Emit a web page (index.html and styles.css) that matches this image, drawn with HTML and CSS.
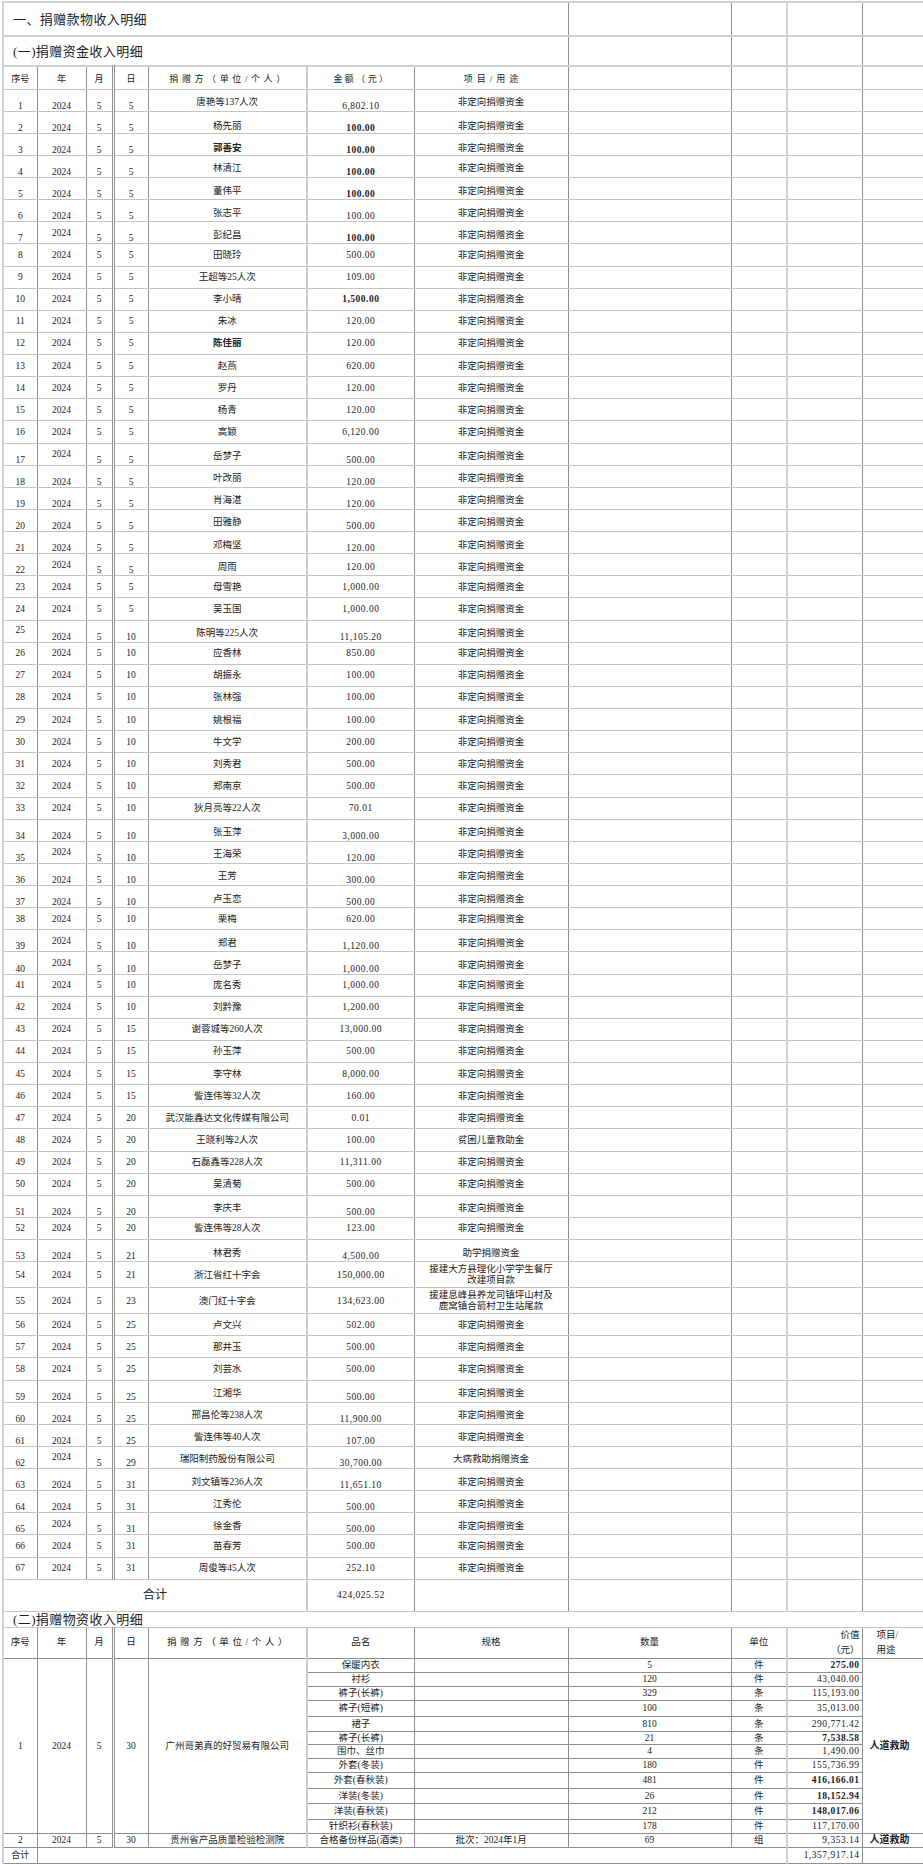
FILE: index.html
```html
<!DOCTYPE html>
<html lang="zh-CN">
<head>
<meta charset="utf-8">
<title>捐赠款物收入明细</title>
<link rel="stylesheet" href="styles.css">
</head>
<body>
<table class="sheet">
<colgroup>
<col class="c1"><col class="c2"><col class="c3"><col class="c4"><col class="c5"><col class="c6"><col class="c7"><col class="c8"><col class="c9"><col class="c10"><col class="c11">
</colgroup>
<tbody class="top">
<tr class="t1"><td colspan="7" class="tt">一、捐赠款物收入明细</td><td></td><td></td><td></td><td></td></tr>
<tr class="t2"><td colspan="7" class="tt">(一)捐赠资金收入明细</td><td></td><td></td><td></td><td></td></tr>
<tr class="hd"><td>序号</td><td>年</td><td>月</td><td>日</td><td class="sp1">捐赠方（单位/个人）</td><td class="sp2">金额（元）</td><td class="sp3">项目/用途</td><td></td><td></td><td></td><td></td></tr>
</tbody>
<tbody class="s1">
<tr class="o"><td>1</td><td>2024</td><td>5</td><td>5</td><td>唐艳等137人次</td><td>6,802.10</td><td>非定向捐赠资金</td><td></td><td></td><td></td><td></td></tr>
<tr class="b"><td>2</td><td>2024</td><td>5</td><td>5</td><td>杨先丽</td><td class="bd">100.00</td><td>非定向捐赠资金</td><td></td><td></td><td></td><td></td></tr>
<tr class="b"><td>3</td><td>2024</td><td>5</td><td>5</td><td class="bd">郭善安</td><td class="bd">100.00</td><td>非定向捐赠资金</td><td></td><td></td><td></td><td></td></tr>
<tr class="o"><td>4</td><td>2024</td><td>5</td><td>5</td><td>林清江</td><td class="bd">100.00</td><td>非定向捐赠资金</td><td></td><td></td><td></td><td></td></tr>
<tr class="o"><td>5</td><td>2024</td><td>5</td><td>5</td><td>董伟平</td><td class="bd">100.00</td><td>非定向捐赠资金</td><td></td><td></td><td></td><td></td></tr>
<tr class="o"><td>6</td><td>2024</td><td>5</td><td>5</td><td>张志平</td><td>100.00</td><td>非定向捐赠资金</td><td></td><td></td><td></td><td></td></tr>
<tr class="o yt"><td>7</td><td>2024</td><td>5</td><td>5</td><td>彭纪昌</td><td class="bd">100.00</td><td>非定向捐赠资金</td><td></td><td></td><td></td><td></td></tr>
<tr><td>8</td><td>2024</td><td>5</td><td>5</td><td>田晓玲</td><td>500.00</td><td>非定向捐赠资金</td><td></td><td></td><td></td><td></td></tr>
<tr><td>9</td><td>2024</td><td>5</td><td>5</td><td>王超等25人次</td><td>109.00</td><td>非定向捐赠资金</td><td></td><td></td><td></td><td></td></tr>
<tr><td>10</td><td>2024</td><td>5</td><td>5</td><td>李小晴</td><td class="bd">1,500.00</td><td>非定向捐赠资金</td><td></td><td></td><td></td><td></td></tr>
<tr><td>11</td><td>2024</td><td>5</td><td>5</td><td>朱冰</td><td>120.00</td><td>非定向捐赠资金</td><td></td><td></td><td></td><td></td></tr>
<tr><td>12</td><td>2024</td><td>5</td><td>5</td><td class="bd">陈佳丽</td><td>120.00</td><td>非定向捐赠资金</td><td></td><td></td><td></td><td></td></tr>
<tr><td>13</td><td>2024</td><td>5</td><td>5</td><td>赵燕</td><td>620.00</td><td>非定向捐赠资金</td><td></td><td></td><td></td><td></td></tr>
<tr><td>14</td><td>2024</td><td>5</td><td>5</td><td>罗丹</td><td>120.00</td><td>非定向捐赠资金</td><td></td><td></td><td></td><td></td></tr>
<tr><td>15</td><td>2024</td><td>5</td><td>5</td><td>杨青</td><td>120.00</td><td>非定向捐赠资金</td><td></td><td></td><td></td><td></td></tr>
<tr><td>16</td><td>2024</td><td>5</td><td>5</td><td>高颖</td><td>6,120.00</td><td>非定向捐赠资金</td><td></td><td></td><td></td><td></td></tr>
<tr class="o yt"><td>17</td><td>2024</td><td>5</td><td>5</td><td>岳梦子</td><td>500.00</td><td>非定向捐赠资金</td><td></td><td></td><td></td><td></td></tr>
<tr class="o"><td>18</td><td>2024</td><td>5</td><td>5</td><td>叶改丽</td><td>120.00</td><td>非定向捐赠资金</td><td></td><td></td><td></td><td></td></tr>
<tr class="o"><td>19</td><td>2024</td><td>5</td><td>5</td><td>肖海湛</td><td>120.00</td><td>非定向捐赠资金</td><td></td><td></td><td></td><td></td></tr>
<tr class="o"><td>20</td><td>2024</td><td>5</td><td>5</td><td>田雅静</td><td>500.00</td><td>非定向捐赠资金</td><td></td><td></td><td></td><td></td></tr>
<tr class="o"><td>21</td><td>2024</td><td>5</td><td>5</td><td>邓梅坚</td><td>120.00</td><td>非定向捐赠资金</td><td></td><td></td><td></td><td></td></tr>
<tr class="o yt at"><td>22</td><td>2024</td><td>5</td><td>5</td><td>周雨</td><td>120.00</td><td>非定向捐赠资金</td><td></td><td></td><td></td><td></td></tr>
<tr><td>23</td><td>2024</td><td>5</td><td>5</td><td>母雪艳</td><td>1,000.00</td><td>非定向捐赠资金</td><td></td><td></td><td></td><td></td></tr>
<tr><td>24</td><td>2024</td><td>5</td><td>5</td><td>吴玉国</td><td>1,000.00</td><td>非定向捐赠资金</td><td></td><td></td><td></td><td></td></tr>
<tr class="o st"><td>25</td><td>2024</td><td>5</td><td>10</td><td>陈明等225人次</td><td>11,105.20</td><td>非定向捐赠资金</td><td></td><td></td><td></td><td></td></tr>
<tr><td>26</td><td>2024</td><td>5</td><td>10</td><td>应香林</td><td>850.00</td><td>非定向捐赠资金</td><td></td><td></td><td></td><td></td></tr>
<tr><td>27</td><td>2024</td><td>5</td><td>10</td><td>胡振永</td><td>100.00</td><td>非定向捐赠资金</td><td></td><td></td><td></td><td></td></tr>
<tr><td>28</td><td>2024</td><td>5</td><td>10</td><td>张林强</td><td>100.00</td><td>非定向捐赠资金</td><td></td><td></td><td></td><td></td></tr>
<tr><td>29</td><td>2024</td><td>5</td><td>10</td><td>姚根福</td><td>100.00</td><td>非定向捐赠资金</td><td></td><td></td><td></td><td></td></tr>
<tr><td>30</td><td>2024</td><td>5</td><td>10</td><td>牛文学</td><td>200.00</td><td>非定向捐赠资金</td><td></td><td></td><td></td><td></td></tr>
<tr><td>31</td><td>2024</td><td>5</td><td>10</td><td>刘秀君</td><td>500.00</td><td>非定向捐赠资金</td><td></td><td></td><td></td><td></td></tr>
<tr><td>32</td><td>2024</td><td>5</td><td>10</td><td>郑南京</td><td>500.00</td><td>非定向捐赠资金</td><td></td><td></td><td></td><td></td></tr>
<tr><td>33</td><td>2024</td><td>5</td><td>10</td><td>狄月亮等22人次</td><td>70.01</td><td>非定向捐赠资金</td><td></td><td></td><td></td><td></td></tr>
<tr class="o"><td>34</td><td>2024</td><td>5</td><td>10</td><td>张玉萍</td><td>3,000.00</td><td>非定向捐赠资金</td><td></td><td></td><td></td><td></td></tr>
<tr class="o yt"><td>35</td><td>2024</td><td>5</td><td>10</td><td>王海荣</td><td>120.00</td><td>非定向捐赠资金</td><td></td><td></td><td></td><td></td></tr>
<tr class="o"><td>36</td><td>2024</td><td>5</td><td>10</td><td>王芳</td><td>300.00</td><td>非定向捐赠资金</td><td></td><td></td><td></td><td></td></tr>
<tr class="o"><td>37</td><td>2024</td><td>5</td><td>10</td><td>卢玉恋</td><td>500.00</td><td>非定向捐赠资金</td><td></td><td></td><td></td><td></td></tr>
<tr><td>38</td><td>2024</td><td>5</td><td>10</td><td>栗梅</td><td>620.00</td><td>非定向捐赠资金</td><td></td><td></td><td></td><td></td></tr>
<tr class="o yt"><td>39</td><td>2024</td><td>5</td><td>10</td><td>郑君</td><td>1,120.00</td><td>非定向捐赠资金</td><td></td><td></td><td></td><td></td></tr>
<tr class="o yt"><td>40</td><td>2024</td><td>5</td><td>10</td><td>岳梦子</td><td>1,000.00</td><td>非定向捐赠资金</td><td></td><td></td><td></td><td></td></tr>
<tr><td>41</td><td>2024</td><td>5</td><td>10</td><td>庞名秀</td><td>1,000.00</td><td>非定向捐赠资金</td><td></td><td></td><td></td><td></td></tr>
<tr><td>42</td><td>2024</td><td>5</td><td>10</td><td>刘黔豫</td><td>1,200.00</td><td>非定向捐赠资金</td><td></td><td></td><td></td><td></td></tr>
<tr><td>43</td><td>2024</td><td>5</td><td>15</td><td>谢蓉城等260人次</td><td>13,000.00</td><td>非定向捐赠资金</td><td></td><td></td><td></td><td></td></tr>
<tr><td>44</td><td>2024</td><td>5</td><td>15</td><td>孙玉萍</td><td>500.00</td><td>非定向捐赠资金</td><td></td><td></td><td></td><td></td></tr>
<tr><td>45</td><td>2024</td><td>5</td><td>15</td><td>李守林</td><td>8,000.00</td><td>非定向捐赠资金</td><td></td><td></td><td></td><td></td></tr>
<tr><td>46</td><td>2024</td><td>5</td><td>15</td><td>訾连伟等32人次</td><td>160.00</td><td>非定向捐赠资金</td><td></td><td></td><td></td><td></td></tr>
<tr><td>47</td><td>2024</td><td>5</td><td>20</td><td>武汉能鑫达文化传媒有限公司</td><td>0.01</td><td>非定向捐赠资金</td><td></td><td></td><td></td><td></td></tr>
<tr><td>48</td><td>2024</td><td>5</td><td>20</td><td>王晓利等2人次</td><td>100.00</td><td>贫困儿童救助金</td><td></td><td></td><td></td><td></td></tr>
<tr><td>49</td><td>2024</td><td>5</td><td>20</td><td>石磊鑫等228人次</td><td>11,311.00</td><td>非定向捐赠资金</td><td></td><td></td><td></td><td></td></tr>
<tr><td>50</td><td>2024</td><td>5</td><td>20</td><td>吴清菊</td><td>500.00</td><td>非定向捐赠资金</td><td></td><td></td><td></td><td></td></tr>
<tr class="o"><td>51</td><td>2024</td><td>5</td><td>20</td><td>李庆丰</td><td>500.00</td><td>非定向捐赠资金</td><td></td><td></td><td></td><td></td></tr>
<tr><td>52</td><td>2024</td><td>5</td><td>20</td><td>訾连伟等28人次</td><td>123.00</td><td>非定向捐赠资金</td><td></td><td></td><td></td><td></td></tr>
<tr class="o"><td>53</td><td>2024</td><td>5</td><td>21</td><td>林君秀</td><td>4,500.00</td><td>助学捐赠资金</td><td></td><td></td><td></td><td></td></tr>
<tr class="tall"><td>54</td><td>2024</td><td>5</td><td>21</td><td>浙江省红十字会</td><td>150,000.00</td><td class="two">援建大方县理化小学学生餐厅<br>改建项目款</td><td></td><td></td><td></td><td></td></tr>
<tr class="tall"><td>55</td><td>2024</td><td>5</td><td>23</td><td>澳门红十字会</td><td>134,623.00</td><td class="two">援建息峰县养龙司镇坪山村及<br>鹿窝镇合箭村卫生站尾款</td><td></td><td></td><td></td><td></td></tr>
<tr><td>56</td><td>2024</td><td>5</td><td>25</td><td>卢文兴</td><td>502.00</td><td>非定向捐赠资金</td><td></td><td></td><td></td><td></td></tr>
<tr><td>57</td><td>2024</td><td>5</td><td>25</td><td>那井玉</td><td>500.00</td><td>非定向捐赠资金</td><td></td><td></td><td></td><td></td></tr>
<tr><td>58</td><td>2024</td><td>5</td><td>25</td><td>刘芸水</td><td>500.00</td><td>非定向捐赠资金</td><td></td><td></td><td></td><td></td></tr>
<tr class="o"><td>59</td><td>2024</td><td>5</td><td>25</td><td>江湘华</td><td>500.00</td><td>非定向捐赠资金</td><td></td><td></td><td></td><td></td></tr>
<tr class="o"><td>60</td><td>2024</td><td>5</td><td>25</td><td>邢昌伦等238人次</td><td>11,900.00</td><td>非定向捐赠资金</td><td></td><td></td><td></td><td></td></tr>
<tr class="o"><td>61</td><td>2024</td><td>5</td><td>25</td><td>訾连伟等40人次</td><td>107.00</td><td>非定向捐赠资金</td><td></td><td></td><td></td><td></td></tr>
<tr class="o yt"><td>62</td><td>2024</td><td>5</td><td>29</td><td>瑞阳制药股份有限公司</td><td>30,700.00</td><td>大病救助捐赠资金</td><td></td><td></td><td></td><td></td></tr>
<tr class="o"><td>63</td><td>2024</td><td>5</td><td>31</td><td>刘文镇等236人次</td><td>11,651.10</td><td>非定向捐赠资金</td><td></td><td></td><td></td><td></td></tr>
<tr class="o"><td>64</td><td>2024</td><td>5</td><td>31</td><td>江秀伦</td><td>500.00</td><td>非定向捐赠资金</td><td></td><td></td><td></td><td></td></tr>
<tr class="o yt"><td>65</td><td>2024</td><td>5</td><td>31</td><td>徐金香</td><td>500.00</td><td>非定向捐赠资金</td><td></td><td></td><td></td><td></td></tr>
<tr><td>66</td><td>2024</td><td>5</td><td>31</td><td>苗春芳</td><td>500.00</td><td>非定向捐赠资金</td><td></td><td></td><td></td><td></td></tr>
<tr><td>67</td><td>2024</td><td>5</td><td>31</td><td>周俊等45人次</td><td>252.10</td><td>非定向捐赠资金</td><td></td><td></td><td></td><td></td></tr>
</tbody>
<tbody class="mid">
<tr class="sum1"><td colspan="5" class="big">合计</td><td class="num">424,025.52</td><td></td><td></td><td></td><td></td><td></td></tr>
<tr class="t3"><td colspan="11" class="tt">(二)捐赠物资收入明细</td></tr>
</tbody>
<tbody class="s2">
<tr class="h2"><td>序号</td><td>年</td><td>月</td><td>日</td><td class="sp1">捐赠方（单位/个人）</td><td>品名</td><td>规格</td><td>数量</td><td>单位</td><td class="val">价值<br>（元）</td><td class="use">项目/<br>用途</td></tr>
<tr class="h14"><td rowspan="12">1</td><td rowspan="12">2024</td><td rowspan="12">5</td><td rowspan="12">30</td><td rowspan="12">广州哥弟真的好贸易有限公司</td><td>保暖内衣</td><td></td><td>5</td><td>件</td><td class="r bd">275.00</td><td rowspan="12" class="aid bd">人道救助</td></tr>
<tr class="h14"><td>衬衫</td><td></td><td>120</td><td>件</td><td class="r">43,040.00</td></tr>
<tr class="h14"><td>裤子(长裤)</td><td></td><td>329</td><td>条</td><td class="r">115,193.00</td></tr>
<tr class="h16"><td>裤子(短裤)</td><td></td><td>100</td><td>条</td><td class="r">35,013.00</td></tr>
<tr class="h15"><td>裙子</td><td></td><td>810</td><td>条</td><td class="r">290,771.42</td></tr>
<tr class="h13"><td>裤子(长裤)</td><td></td><td>21</td><td>条</td><td class="r bd">7,538.58</td></tr>
<tr class="h14"><td>围巾、丝巾</td><td></td><td>4</td><td>条</td><td class="r">1,490.00</td></tr>
<tr class="h14"><td>外套(冬装)</td><td></td><td>180</td><td>件</td><td class="r">155,736.99</td></tr>
<tr class="h16"><td>外套(春秋装)</td><td></td><td>481</td><td>件</td><td class="r bd">416,166.01</td></tr>
<tr class="h15"><td>洋装(冬装)</td><td></td><td>26</td><td>件</td><td class="r bd">18,152.94</td></tr>
<tr class="h16"><td>洋装(春秋装)</td><td></td><td>212</td><td>件</td><td class="r bd">148,017.06</td></tr>
<tr class="h14"><td>针织衫(春秋装)</td><td></td><td>178</td><td>件</td><td class="r">117,170.00</td></tr>
<tr class="h14"><td>2</td><td>2024</td><td>5</td><td>30</td><td>贵州省产品质量检验检测院</td><td>合格备份样品(酒类)</td><td>批次：2024年1月</td><td>69</td><td>组</td><td class="r">9,353.14</td><td class="aid bd">人道救助</td></tr>
<tr class="h16 sum2"><td>合计</td><td colspan="8"></td><td class="r">1,357,917.14</td><td></td></tr>
</tbody>
</table>
</body>
</html>
```

FILE: styles.css
```css
* { box-sizing: border-box; }

body {
  margin: 0;
  background: #ffffff;
  color: #222222;
  font-family: "Liberation Serif", "Noto Sans CJK SC", serif;
}

.sheet {
  border-collapse: collapse;
  table-layout: fixed;
  width: 920px;
  margin: 1px 0 0 2px;
  font-size: 9.5px;
  line-height: 10px;
  border-top: 2px solid #d0d0d0;
  border-right: 1px solid #c4c4c4;
  border-bottom: 1px solid #9a9a9a;
}

.sheet td {
  padding: 0 2px;
  text-align: center;
  vertical-align: middle;
  white-space: nowrap;
  overflow: hidden;
  border-left: 1px solid #8e8e8e;
  border-right: 1px solid #8e8e8e;
  border-top: 1px solid #c4c4c4;
  border-bottom: 1px solid #c4c4c4;
}

col.c1 { width: 34px; border-left: 2px solid #cfcfcf; }
col.c2 { width: 49px; }
col.c3 { width: 27px; border-right: 3px double #8e8e8e; }
col.c4 { width: 35px; }
col.c5 { width: 159px; border-right: 2px solid #cdcdcd; }
col.c6 { width: 107px; }
col.c7 { width: 154px; }
col.c8 { width: 163px; }
col.c9 { width: 56px; border-right: 2px solid #d2d2d2; }
col.c10 { width: 75px; border-right: 1px solid #c4c4c4; }
col.c11 { width: 61px; border-right: 1px solid #c4c4c4; }

.bd { font-weight: 700; }

/* title rows */
tr.t1 { height: 34px; }
tr.t2 { height: 30px; }
tr.t1 td, tr.t2 td { border-bottom: 2px solid #d0d0d0; }

.sheet td.tt {
  text-align: left;
  font-size: 13px;
  line-height: 16px;
  padding: 2px 0 0 9px;
  letter-spacing: 0.4px;
}

tr.hd { height: 23px; }
tr.hd td { font-size: 9px; padding-top: 3px; }

.sp1 { letter-spacing: 3.6px; text-indent: 3.6px; }
.sp2 { letter-spacing: 2.4px; text-indent: 2.4px; }
.sp3 { letter-spacing: 4px; text-indent: 4px; }

/* section 1 data rows */
.s1 tr { height: 22.13px; }
.s1 tr.tall { height: 26px; }
.s1 td.two { white-space: normal; line-height: 11px; }
.s1 td:nth-child(6), .sheet td.num, .sheet td.r { letter-spacing: 0.5px; }

.s1 tr.o td:nth-child(-n+4),
.s1 tr.o td:nth-child(6) { vertical-align: bottom; }
.s1 tr.o td:nth-child(5),
.s1 tr.o td:nth-child(7) { padding-top: 4px; }

.s1 tr.b td:nth-child(-n+4),
.s1 tr.b td:nth-child(6) { vertical-align: bottom; }
.s1 tr.b td:nth-child(5),
.s1 tr.b td:nth-child(7) { vertical-align: bottom; padding-bottom: 2px; }

.s1 tr.yt td:nth-child(2) { vertical-align: middle; }
.s1 tr.st td:nth-child(1) { vertical-align: middle; padding-bottom: 3px; }
.s1 tr.at td:nth-child(6) { vertical-align: middle; padding-top: 4px; }

/* totals and section 2 title */
tr.sum1 { height: 32px; }
.sheet td.big { font-size: 12px; line-height: 14px; }
tr.t3 { height: 16px; }
tr.t3 td.tt { padding: 0 0 0 9px; line-height: 15px; }

/* section 2 */
.s2 td { border-top-color: #8e8e8e; border-bottom-color: #8e8e8e; }
tr.h2 { height: 30px; }
tr.h2 td { line-height: 15px; }
.sheet td.val { text-align: right; padding-right: 2px; }
.sheet td.use { text-align: left; padding-left: 14px; }
.sheet td.r { text-align: right; padding-right: 2px; }
.sheet td.aid { text-align: left; padding-left: 7px; font-size: 10px; }

tr.h13 { height: 13px; }
tr.h14 { height: 14px; }
tr.h15 { height: 15px; }
tr.h16 { height: 16px; }
tr.h17 { height: 17px; }

tr.sum2 td:first-child { font-size: 9px; }
```
